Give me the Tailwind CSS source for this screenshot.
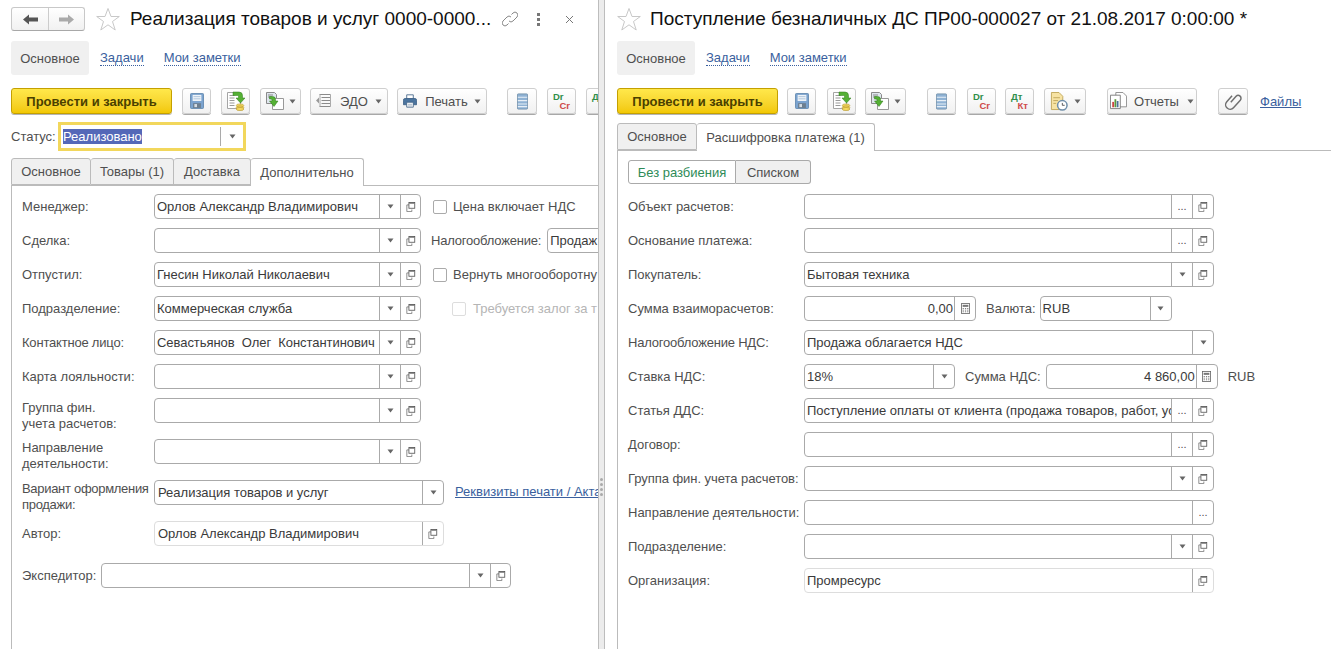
<!DOCTYPE html>
<html>
  <head>
    <title>1C</title>
    <meta charset="utf-8" />
    <script src="https://cdn.jsdelivr.net/npm/@tailwindcss/browser@4"></script>
  </head>

  <body class="bg-white">
    <!-- Icon sprites -->
    <svg class="hidden" xmlns="http://www.w3.org/2000/svg">
      <symbol id="star" viewBox="0 0 24 24"><path d="M12 1.500l3 8h8.300l-6.800 5 2.700 8.500-7.200-5.200-7.200 5.200 2.700-8.500-6.800-5h8.300z" fill="#fff" stroke="#c8c8c8"/></symbol>
      <symbol id="arrow" viewBox="0 0 7 5"><path d="M0.500 0.500h6l-3 4z" fill="#666"/></symbol>
      <symbol id="open" viewBox="0 0 12 12"><path d="M3.500 3.500h-2.500v8h6v-2.500" fill="none" stroke="#777"/><rect x="3.500" y="0.500" width="7" height="7" fill="#fff" stroke="#555"/><path d="M4 1.500h6" stroke="#555"/></symbol>
      <symbol id="calc" viewBox="0 0 11 13"><rect x="0.500" y="0.500" width="10" height="12" fill="#fff" stroke="#666"/><rect x="2" y="2" width="7" height="2.500" fill="#777"/><path d="M2 6.500h1.500M4.800 6.500h1.500M7.500 6.500h1.500M2 8.500h1.500M4.800 8.500h1.500M7.500 8.500h1.500M2 10.500h1.500M4.800 10.500h1.500M7.500 10.500h1.500" stroke="#666"/></symbol>
      <symbol id="save" viewBox="0 0 16 18"><path d="M0.500 1.500a1 1 0 011-1h13a1 1 0 011 1v15a1 1 0 01-1 1h-13a1 1 0 01-1-1z" fill="#7ba3cf" stroke="#5f86ad"/><rect x="3" y="2" width="10" height="7" fill="#eef3f8"/><path d="M4 4h8M4 6.500h8" stroke="#a9c0d8"/><rect x="3.500" y="11.500" width="9" height="5.500" fill="#6d7f90"/><rect x="5" y="12.500" width="3" height="3.500" fill="#d5dde5"/></symbol>
      <symbol id="post" viewBox="0 0 18 20"><path d="M0.500 1.500h10l3 3v13h-13z" fill="#fff" stroke="#a5a5a5"/><path d="M2.500 4.500h5M2.500 7h5M2.500 9.500h5M2.500 12h5M2.500 14.500h5" stroke="#9a9a9a"/><path d="M6 1h6a3.500 3.500 0 013.500 3.500v2.500h2.500l-4.500 5-4.500-5h2.500v-1.500a1 1 0 00-1-1h-4.500z" fill="#55b035" stroke="#2c7a19" stroke-width="0.500"/><ellipse cx="13" cy="14.500" rx="3.800" ry="1.600" fill="#f5d95f" stroke="#b3922a" stroke-width="0.600"/><ellipse cx="13" cy="16.500" rx="3.800" ry="1.600" fill="#f5d95f" stroke="#b3922a" stroke-width="0.600"/><ellipse cx="13" cy="18" rx="3.800" ry="1.600" fill="#f5d95f" stroke="#b3922a" stroke-width="0.600"/></symbol>
      <symbol id="rel" viewBox="0 0 18 18"><path d="M0.500 0.500h8l2 2v9h-10z" fill="#dfe6ee" stroke="#8a8a8a"/><path d="M2 3h5M2 5h4" stroke="#8a8a8a"/><path d="M6.500 6.500h11v11h-11z" fill="#fff" stroke="#999"/><path d="M3.500 4.500h3a3 3 0 013 3v1.500h2.500l-4 5.500-4.500-5.500h2.500v-1a1 1 0 00-1-1h-1.500z" fill="#55b035" stroke="#2c7a19" stroke-width="0.500"/></symbol>
      <symbol id="edo" viewBox="0 0 15 16"><path d="M3.500 1.500h11M5.500 4.500h9M5.500 7.500h9M5.500 10.500h9M3.500 13.500h11" stroke="#8a8a8a" fill="none"/><path d="M4 1.500v12" stroke="#aaa"/><path d="M0 7.500l3-3v6z" fill="#999"/><path d="M14.500 1.500v12" stroke="#aaa"/></symbol>
      <symbol id="print" viewBox="0 0 17 16"><path d="M4.500 0.500h8v5h-8z" fill="#fff" stroke="#3c5f85"/><path d="M0.500 7a2 2 0 012-2h12a2 2 0 012 2v5.500h-16z" fill="#4b749e" stroke="#3c5f85"/><path d="M4.500 9.500h8v6h-8z" fill="#fff" stroke="#3c5f85"/><path d="M6 12h5M6 14h5" stroke="#9ab"/></symbol>
      <symbol id="list" viewBox="0 0 13 19"><rect x="0.500" y="0.500" width="12" height="18" rx="1" fill="#8fb2d4" stroke="#6f8ea9"/><path d="M1 4.500h11M1 8.500h11M1 12.500h11M1 15.500h11" stroke="#e8eff6" stroke-width="1.300"/></symbol>
      <symbol id="sched" viewBox="0 0 19 20"><path d="M1.500 0.500h8l4 4v14h-12z" fill="#f7e3a3" stroke="#c2a85c"/><path d="M3.500 6h7M3.500 9h5M3.500 12h3" stroke="#c2a85c"/><circle cx="13" cy="14" r="5" fill="#fff" stroke="#6f8ea9" stroke-width="1.600"/><path d="M13 11.500v2.500h2.500" stroke="#555" fill="none"/></symbol>
      <symbol id="rep" viewBox="0 0 19 20"><path d="M6.500 0.500h8l4 4v12h-12z" fill="#fff" stroke="#888"/><path d="M0.500 3.500h11v15h-11z" fill="#fff" stroke="#777"/><rect x="2.500" y="11" width="2" height="6" fill="#c44"/><rect x="5" y="8" width="2" height="9" fill="#5a9a3c"/><rect x="7.500" y="10" width="2" height="7" fill="#4d7299"/></symbol>
      <symbol id="clip" viewBox="0 0 16 16"><g transform="rotate(42 8 8)"><path d="M5.500 10.500v-7a2.500 2.500 0 015 0v9a4 4 0 01-8 0v-7" fill="none" stroke="#6f6f6f" stroke-width="1.300" transform="translate(1.500 0) scale(0.950)"/></g></symbol>
    </svg>

    <div class="flex w-[1331px] h-[649px] overflow-hidden text-[13px] leading-[17px] text-[#4f4f4f] font-['Liberation_Sans',Arial,sans-serif]">
      <!-- Left form -->
      <div class="w-[598px] h-full shrink-0 overflow-hidden pl-[11px] flex flex-col">
        <div class="w-[640px] flex flex-col">
        <!-- Title -->
        <div class="flex items-center h-[24px] mt-[7px]">
          <div class="flex w-[74px] h-[24px] border border-[#c8c8c8] border-b-[#a8a8a8] rounded-[3px] bg-linear-to-b from-white to-[#f1f1f1]">
            <div class="w-[37px] flex items-center justify-center border-r border-[#ccc]">
              <svg width="15" height="11" viewBox="0 0 15 11"><path d="M0 5.500l6-5v3h9v4h-9v3z" fill="#555"/></svg>
            </div>
            <div class="flex-1 flex items-center justify-center">
              <svg width="15" height="11" viewBox="0 0 15 11"><path d="M15 5.500l-6-5v3h-9v4h9v3z" fill="#aaa"/></svg>
            </div>
          </div>
          <svg class="ml-[11px]" width="24" height="24"><use href="#star"/></svg>
          <div class="ml-[10px] w-[366px] text-[19px] leading-[24px] text-[#111] whitespace-nowrap">Реализация товаров и услуг 0000-0000...</div>
          <svg class="ml-[6px]" width="16" height="16" viewBox="0 0 16 16"><path d="M9.500 3.500l1.500-1.500a2.800 2.800 0 014 4l-4 4a2.800 2.800 0 01-4 0M6.500 12.500l-1.500 1.500a2.800 2.800 0 01-4-4l4-4a2.800 2.800 0 014 0" fill="none" stroke="#888"/></svg>
          <div class="ml-[19px] flex flex-col gap-[2px]">
            <div class="w-[3px] h-[3px] bg-[#777]"></div>
            <div class="w-[3px] h-[3px] bg-[#777]"></div>
            <div class="w-[3px] h-[3px] bg-[#777]"></div>
          </div>
          <svg class="ml-[25px]" width="9" height="9" viewBox="0 0 9 9"><path d="M1 1l7 7M8 1l-7 7" stroke="#777"/></svg>
        </div>

        <!-- Page tabs -->
        <div class="flex items-center h-[34px] mt-[10px]">
          <div class="w-[78px] h-full bg-[#f0f0f0] rounded-[3px] flex items-center justify-center">Основное</div>
          <a class="ml-[11px] text-[#3a5f9e] border-b border-dotted border-[#3a5f9e] leading-[14px]">Задачи</a>
          <a class="ml-[20px] text-[#3a5f9e] border-b border-dotted border-[#3a5f9e] leading-[14px]">Мои заметки</a>
        </div>

        <!-- Command bar -->
        <div class="flex items-center h-[26px] mt-[13px]">
          <button class="w-[161px] h-[26px] rounded-[3px] border border-[#c4a000] bg-linear-to-b from-[#ffe84a] to-[#f2c800] font-bold text-[#4a4000] shadow-[0_1px_0_#b5b5b5]">Провести и закрыть</button>
          <button class="ml-[10px] w-[29px] h-[26px] flex items-center justify-center rounded-[3px] border border-[#cfcfcf] bg-linear-to-b from-white to-[#f1f1f1] shadow-[0_1px_0_#a8a8a8]"><svg width="14" height="16"><use href="#save"/></svg></button>
          <button class="ml-[10px] w-[29px] h-[26px] flex items-center justify-center rounded-[3px] border border-[#cfcfcf] bg-linear-to-b from-white to-[#f1f1f1] shadow-[0_1px_0_#a8a8a8]"><svg width="18" height="20"><use href="#post"/></svg></button>
          <button class="ml-[10px] w-[41px] h-[26px] flex items-center justify-center gap-[5px] rounded-[3px] border border-[#cfcfcf] bg-linear-to-b from-white to-[#f1f1f1] shadow-[0_1px_0_#a8a8a8]"><svg width="18" height="18"><use href="#rel"/></svg><svg width="7" height="5"><use href="#arrow"/></svg></button>
          <button class="ml-[9px] w-[78px] h-[26px] flex items-center justify-center rounded-[3px] border border-[#cfcfcf] bg-linear-to-b from-white to-[#f1f1f1] shadow-[0_1px_0_#a8a8a8]"><svg width="15" height="16"><use href="#edo"/></svg><span class="ml-[9px]">ЭДО</span><svg class="ml-[7px]" width="7" height="5"><use href="#arrow"/></svg></button>
          <button class="ml-[9px] w-[90px] h-[26px] flex items-center justify-center rounded-[3px] border border-[#cfcfcf] bg-linear-to-b from-white to-[#f1f1f1] shadow-[0_1px_0_#a8a8a8]"><svg width="14" height="14"><use href="#print"/></svg><span class="ml-[8px]">Печать</span><svg class="ml-[6px]" width="7" height="5"><use href="#arrow"/></svg></button>
          <button class="ml-[20px] w-[30px] h-[26px] flex items-center justify-center rounded-[3px] border border-[#cfcfcf] bg-linear-to-b from-white to-[#f1f1f1] shadow-[0_1px_0_#a8a8a8]"><svg width="11" height="17"><use href="#list"/></svg></button>
          <button class="ml-[10px] w-[29px] h-[26px] flex flex-col justify-center rounded-[3px] border border-[#cfcfcf] bg-linear-to-b from-white to-[#f1f1f1] shadow-[0_1px_0_#a8a8a8] text-[9.500px] leading-[9px] font-bold"><span class="pl-[5px] self-start text-[#2f8f4a]">Dr</span><span class="pr-[5px] self-end text-[#cf4a4a]">Cr</span></button>
          <button class="ml-[10px] w-[29px] h-[26px] flex flex-col justify-center rounded-[3px] border border-[#cfcfcf] bg-linear-to-b from-white to-[#f1f1f1] shadow-[0_1px_0_#a8a8a8] text-[9.500px] leading-[9px] font-bold"><span class="pl-[5px] self-start text-[#2f8f4a]">Дт</span><span class="pr-[5px] self-end text-[#cf4a4a]">Кт</span></button>
        </div>

        <!-- Status -->
        <div class="flex items-center mt-[8px] h-[29px]">
          <span class="w-[47px]">Статус:</span>
          <div class="w-[188px] h-[29px] border-[3px] border-[#f2d75c] flex items-center">
            <span class="ml-[2px] bg-[#5468b8] text-white leading-[15px]">Реализовано</span>
            <div class="ml-auto w-[23px] h-[19px] border-l border-[#aaa] flex items-center justify-center"><svg width="7" height="5"><use href="#arrow"/></svg></div>
          </div>
        </div>

        <!-- Form tabs -->
        <div class="flex h-[28px] mt-[7px] relative z-10">
          <div class="w-[80px] h-[27px] bg-[#f0f0f0] border border-[#bbb] rounded-t-[3px] flex items-center justify-center">Основное</div>
          <div class="w-[83px] h-[27px] bg-[#f0f0f0] border border-l-0 border-[#bbb] rounded-t-[3px] flex items-center justify-center">Товары (1)</div>
          <div class="w-[77px] h-[27px] bg-[#f0f0f0] border border-l-0 border-[#bbb] rounded-t-[3px] flex items-center justify-center">Доставка</div>
          <div class="w-[113px] h-[28px] bg-white border border-b-0 border-l-0 border-[#bbb] rounded-t-[3px] flex items-center justify-center">Дополнительно</div>
        </div>

        <!-- Form body -->
        <div class="-mt-px border-l border-t border-[#bbb] h-[470px] pl-[10px] pt-[8px] flex flex-col gap-[9px]">
          <div class="flex h-[25px]">
            <span class="w-[132px] leading-[25px]">Менеджер:</span>
            <div class="w-[267px] h-[25px] border border-[#aaa] rounded-[4px] flex items-center">
              <span class="flex-1 pl-[2px] text-[#3a3a3a] whitespace-nowrap overflow-hidden">Орлов Александр Владимирович</span>
              <div class="w-[21px] h-full border-l border-[#aaa] flex items-center justify-center"><svg width="7" height="5"><use href="#arrow"/></svg></div>
              <div class="w-[20px] h-full border-l border-[#aaa] flex items-center justify-center"><svg width="10" height="10"><use href="#open"/></svg></div>
            </div>
            <div class="ml-[12px] flex items-center"><div class="w-[14px] h-[14px] border border-[#aaa] rounded-[2px]"></div><span class="ml-[6px]">Цена включает НДС</span></div>
          </div>
          <div class="flex h-[25px]">
            <span class="w-[132px] leading-[25px]">Сделка:</span>
            <div class="w-[267px] h-[25px] border border-[#aaa] rounded-[4px] flex items-center">
              <span class="flex-1"></span>
              <div class="w-[21px] h-full border-l border-[#aaa] flex items-center justify-center"><svg width="7" height="5"><use href="#arrow"/></svg></div>
              <div class="w-[20px] h-full border-l border-[#aaa] flex items-center justify-center"><svg width="10" height="10"><use href="#open"/></svg></div>
            </div>
            <span class="ml-[10px] leading-[25px] tracking-[-0.2px]">Налогообложение:</span>
            <div class="ml-[6px] w-[100px] h-[25px] border border-[#aaa] rounded-[4px] pl-[2px] leading-[23px] text-[#3a3a3a]">Продаж</div>
          </div>
          <div class="flex h-[25px]">
            <span class="w-[132px] leading-[25px]">Отпустил:</span>
            <div class="w-[267px] h-[25px] border border-[#aaa] rounded-[4px] flex items-center">
              <span class="flex-1 pl-[2px] text-[#3a3a3a] whitespace-nowrap overflow-hidden">Гнесин Николай Николаевич</span>
              <div class="w-[21px] h-full border-l border-[#aaa] flex items-center justify-center"><svg width="7" height="5"><use href="#arrow"/></svg></div>
              <div class="w-[20px] h-full border-l border-[#aaa] flex items-center justify-center"><svg width="10" height="10"><use href="#open"/></svg></div>
            </div>
            <div class="ml-[12px] flex items-center whitespace-nowrap"><div class="w-[14px] h-[14px] border border-[#aaa] rounded-[2px]"></div><span class="ml-[6px]">Вернуть многооборотну</span></div>
          </div>
          <div class="flex h-[25px]">
            <span class="w-[132px] leading-[25px]">Подразделение:</span>
            <div class="w-[267px] h-[25px] border border-[#aaa] rounded-[4px] flex items-center">
              <span class="flex-1 pl-[2px] text-[#3a3a3a] whitespace-nowrap overflow-hidden">Коммерческая служба</span>
              <div class="w-[21px] h-full border-l border-[#aaa] flex items-center justify-center"><svg width="7" height="5"><use href="#arrow"/></svg></div>
              <div class="w-[20px] h-full border-l border-[#aaa] flex items-center justify-center"><svg width="10" height="10"><use href="#open"/></svg></div>
            </div>
            <div class="ml-[31px] flex items-center whitespace-nowrap text-[#b5b5b5]"><div class="w-[14px] h-[14px] border border-[#ddd] rounded-[2px]"></div><span class="ml-[7px]">Требуется залог за т</span></div>
          </div>
          <div class="flex h-[25px]">
            <span class="w-[132px] leading-[25px] tracking-[-0.2px]">Контактное лицо:</span>
            <div class="w-[267px] h-[25px] border border-[#aaa] rounded-[4px] flex items-center">
              <span class="flex-1 min-w-0 pl-[2px] text-[#3a3a3a] whitespace-pre overflow-hidden tracking-[-0.05px]">Севастьянов  Олег  Константинович</span>
              <div class="w-[21px] h-full border-l border-[#aaa] flex items-center justify-center shrink-0"><svg width="7" height="5"><use href="#arrow"/></svg></div>
              <div class="w-[20px] h-full border-l border-[#aaa] flex items-center justify-center shrink-0"><svg width="10" height="10"><use href="#open"/></svg></div>
            </div>
          </div>
          <div class="flex h-[25px]">
            <span class="w-[132px] leading-[25px]">Карта лояльности:</span>
            <div class="w-[267px] h-[25px] border border-[#aaa] rounded-[4px] flex items-center">
              <span class="flex-1"></span>
              <div class="w-[21px] h-full border-l border-[#aaa] flex items-center justify-center"><svg width="7" height="5"><use href="#arrow"/></svg></div>
              <div class="w-[20px] h-full border-l border-[#aaa] flex items-center justify-center"><svg width="10" height="10"><use href="#open"/></svg></div>
            </div>
          </div>
          <div class="flex h-[32px]">
            <span class="w-[132px] pt-[2px] leading-[16px]">Группа фин.<br />учета расчетов:</span>
            <div class="w-[267px] h-[25px] border border-[#aaa] rounded-[4px] flex items-center">
              <span class="flex-1"></span>
              <div class="w-[21px] h-full border-l border-[#aaa] flex items-center justify-center"><svg width="7" height="5"><use href="#arrow"/></svg></div>
              <div class="w-[20px] h-full border-l border-[#aaa] flex items-center justify-center"><svg width="10" height="10"><use href="#open"/></svg></div>
            </div>
          </div>
          <div class="flex h-[32px]">
            <span class="w-[132px] pt-[1px] leading-[16px]">Направление<br />деятельности:</span>
            <div class="w-[267px] h-[25px] border border-[#aaa] rounded-[4px] flex items-center">
              <span class="flex-1"></span>
              <div class="w-[21px] h-full border-l border-[#aaa] flex items-center justify-center"><svg width="7" height="5"><use href="#arrow"/></svg></div>
              <div class="w-[20px] h-full border-l border-[#aaa] flex items-center justify-center"><svg width="10" height="10"><use href="#open"/></svg></div>
            </div>
          </div>
          <div class="flex h-[32px]">
            <span class="w-[132px] pt-[1px] leading-[16px] tracking-[-0.3px]">Вариант оформления<br />продажи:</span>
            <div class="w-[290px] h-[25px] border border-[#aaa] rounded-[4px] flex items-center">
              <span class="flex-1 pl-[3px] text-[#3a3a3a] whitespace-nowrap">Реализация товаров и услуг</span>
              <div class="w-[21px] h-full border-l border-[#aaa] flex items-center justify-center"><svg width="7" height="5"><use href="#arrow"/></svg></div>
            </div>
            <a class="ml-[11px] leading-[24px] text-[#3a5f9e] underline whitespace-nowrap">Реквизиты печати / Акта</a>
          </div>
          <div class="flex h-[25px]">
            <span class="w-[132px] leading-[25px]">Автор:</span>
            <div class="w-[290px] h-[25px] border border-[#ddd] rounded-[4px] flex items-center">
              <span class="flex-1 pl-[3px] text-[#3a3a3a] whitespace-nowrap">Орлов Александр Владимирович</span>
              <div class="w-[21px] h-full border-l border-[#aaa] flex items-center justify-center"><svg width="10" height="10"><use href="#open"/></svg></div>
            </div>
          </div>
          <div class="flex h-[25px] mt-[8px]">
            <span class="w-[79px] leading-[25px]">Экспедитор:</span>
            <div class="w-[410px] h-[25px] border border-[#aaa] rounded-[4px] flex items-center">
              <span class="flex-1"></span>
              <div class="w-[21px] h-full border-l border-[#aaa] flex items-center justify-center"><svg width="7" height="5"><use href="#arrow"/></svg></div>
              <div class="w-[20px] h-full border-l border-[#aaa] flex items-center justify-center"><svg width="10" height="10"><use href="#open"/></svg></div>
            </div>
          </div>
        </div>
        </div>
      </div>

      <!-- Splitter -->
      <div class="w-[7px] h-full shrink-0 bg-[#ececec] border-l border-r border-[#bdbdbd] flex flex-col items-center gap-[2px] pt-[478px]">
        <div class="w-[3px] h-[3px] rounded-full bg-[#aaa]"></div>
        <div class="w-[3px] h-[3px] rounded-full bg-[#aaa]"></div>
        <div class="w-[3px] h-[3px] rounded-full bg-[#aaa]"></div>
        <div class="w-[3px] h-[3px] rounded-full bg-[#aaa]"></div>
      </div>

      <!-- Right form -->
      <div class="flex-1 h-full pl-[12px] flex flex-col min-w-0">
        <!-- Title -->
        <div class="flex items-center h-[24px] mt-[7px]">
          <svg width="24" height="24"><use href="#star"/></svg>
          <div class="ml-[9px] text-[19px] leading-[24px] text-[#111] whitespace-nowrap">Поступление безналичных ДС ПР00-000027 от 21.08.2017 0:00:00 *</div>
        </div>

        <!-- Page tabs -->
        <div class="flex items-center h-[34px] mt-[10px]">
          <div class="w-[78px] h-full bg-[#f0f0f0] rounded-[3px] flex items-center justify-center">Основное</div>
          <a class="ml-[11px] text-[#3a5f9e] border-b border-dotted border-[#3a5f9e] leading-[14px]">Задачи</a>
          <a class="ml-[20px] text-[#3a5f9e] border-b border-dotted border-[#3a5f9e] leading-[14px]">Мои заметки</a>
        </div>

        <!-- Command bar -->
        <div class="flex items-center h-[26px] mt-[13px]">
          <button class="w-[161px] h-[26px] rounded-[3px] border border-[#c4a000] bg-linear-to-b from-[#ffe84a] to-[#f2c800] font-bold text-[#4a4000] shadow-[0_1px_0_#b5b5b5]">Провести и закрыть</button>
          <button class="ml-[9px] w-[29px] h-[26px] flex items-center justify-center rounded-[3px] border border-[#cfcfcf] bg-linear-to-b from-white to-[#f1f1f1] shadow-[0_1px_0_#a8a8a8]"><svg width="14" height="16"><use href="#save"/></svg></button>
          <button class="ml-[11px] w-[29px] h-[26px] flex items-center justify-center rounded-[3px] border border-[#cfcfcf] bg-linear-to-b from-white to-[#f1f1f1] shadow-[0_1px_0_#a8a8a8]"><svg width="18" height="20"><use href="#post"/></svg></button>
          <button class="ml-[9px] w-[41px] h-[26px] flex items-center justify-center gap-[5px] rounded-[3px] border border-[#cfcfcf] bg-linear-to-b from-white to-[#f1f1f1] shadow-[0_1px_0_#a8a8a8]"><svg width="18" height="18"><use href="#rel"/></svg><svg width="7" height="5"><use href="#arrow"/></svg></button>
          <button class="ml-[21px] w-[29px] h-[26px] flex items-center justify-center rounded-[3px] border border-[#cfcfcf] bg-linear-to-b from-white to-[#f1f1f1] shadow-[0_1px_0_#a8a8a8]"><svg width="11" height="17"><use href="#list"/></svg></button>
          <button class="ml-[11px] w-[29px] h-[26px] flex flex-col justify-center rounded-[3px] border border-[#cfcfcf] bg-linear-to-b from-white to-[#f1f1f1] shadow-[0_1px_0_#a8a8a8] text-[9.500px] leading-[9px] font-bold"><span class="pl-[5px] self-start text-[#2f8f4a]">Dr</span><span class="pr-[5px] self-end text-[#cf4a4a]">Cr</span></button>
          <button class="ml-[9px] w-[29px] h-[26px] flex flex-col justify-center rounded-[3px] border border-[#cfcfcf] bg-linear-to-b from-white to-[#f1f1f1] shadow-[0_1px_0_#a8a8a8] text-[9.500px] leading-[9px] font-bold"><span class="pl-[5px] self-start text-[#2f8f4a]">Дт</span><span class="pr-[5px] self-end text-[#cf4a4a]">Кт</span></button>
          <button class="ml-[10px] w-[42px] h-[26px] flex items-center justify-center gap-[6px] rounded-[3px] border border-[#cfcfcf] bg-linear-to-b from-white to-[#f1f1f1] shadow-[0_1px_0_#a8a8a8]"><svg width="18" height="19"><use href="#sched"/></svg><svg width="7" height="5"><use href="#arrow"/></svg></button>
          <button class="ml-[21px] w-[90px] h-[26px] flex items-center justify-center rounded-[3px] border border-[#cfcfcf] bg-linear-to-b from-white to-[#f1f1f1] shadow-[0_1px_0_#a8a8a8]"><svg width="17" height="18"><use href="#rep"/></svg><span class="ml-[7px]">Отчеты</span><svg class="ml-[8px]" width="7" height="5"><use href="#arrow"/></svg></button>
          <button class="ml-[21px] w-[30px] h-[26px] flex items-center justify-center rounded-[3px] border border-[#cfcfcf] bg-linear-to-b from-white to-[#f1f1f1] shadow-[0_1px_0_#a8a8a8]"><svg width="19" height="19"><use href="#clip"/></svg></button>
          <a class="ml-[12px] text-[#3a5f9e] underline">Файлы</a>
        </div>

        <!-- Form tabs -->
        <div class="flex h-[28px] mt-[9px] relative z-10">
          <div class="w-[80px] h-[27px] bg-[#f0f0f0] border border-[#bbb] rounded-t-[3px] flex items-center justify-center">Основное</div>
          <div class="w-[178px] h-[28px] bg-white border border-b-0 border-l-0 border-[#bbb] rounded-t-[3px] flex items-center justify-center">Расшифровка платежа (1)</div>
        </div>

        <!-- Form body -->
        <div class="-mt-px border-l border-t border-[#bbb] flex-1 pl-[10px] pt-[9px] flex flex-col gap-[9px]">
          <div class="flex h-[25px]">
            <div class="w-[108px] h-[24px] border border-[#aaa] rounded-l-[3px] flex items-center justify-center text-[#2e8b57]">Без разбиения</div>
            <div class="w-[75px] h-[24px] border border-l-0 border-[#aaa] rounded-r-[3px] bg-[#f0f0f0] flex items-center justify-center">Списком</div>
          </div>
          <div class="flex h-[25px]">
            <span class="w-[176px] leading-[25px]">Объект расчетов:</span>
            <div class="w-[410px] h-[25px] border border-[#aaa] rounded-[4px] flex items-center">
              <span class="flex-1"></span>
              <div class="w-[21px] h-full border-l border-[#aaa] flex items-center justify-center text-[11px]">...</div>
              <div class="w-[21px] h-full border-l border-[#aaa] flex items-center justify-center"><svg width="10" height="10"><use href="#open"/></svg></div>
            </div>
          </div>
          <div class="flex h-[25px]">
            <span class="w-[176px] leading-[25px]">Основание платежа:</span>
            <div class="w-[410px] h-[25px] border border-[#aaa] rounded-[4px] flex items-center">
              <span class="flex-1"></span>
              <div class="w-[21px] h-full border-l border-[#aaa] flex items-center justify-center text-[11px]">...</div>
              <div class="w-[21px] h-full border-l border-[#aaa] flex items-center justify-center"><svg width="10" height="10"><use href="#open"/></svg></div>
            </div>
          </div>
          <div class="flex h-[25px]">
            <span class="w-[176px] leading-[25px]">Покупатель:</span>
            <div class="w-[410px] h-[25px] border border-[#aaa] rounded-[4px] flex items-center">
              <span class="flex-1 pl-[2px] text-[#3a3a3a]">Бытовая техника</span>
              <div class="w-[21px] h-full border-l border-[#aaa] flex items-center justify-center"><svg width="7" height="5"><use href="#arrow"/></svg></div>
              <div class="w-[21px] h-full border-l border-[#aaa] flex items-center justify-center"><svg width="10" height="10"><use href="#open"/></svg></div>
            </div>
          </div>
          <div class="flex h-[25px]">
            <span class="w-[176px] leading-[25px]">Сумма взаиморасчетов:</span>
            <div class="w-[172px] h-[25px] border border-[#aaa] rounded-[4px] flex items-center">
              <span class="flex-1 pr-[1px] text-right text-[#3a3a3a]">0,00</span>
              <div class="w-[21px] h-full border-l border-[#aaa] flex items-center justify-center"><svg width="9" height="11"><use href="#calc"/></svg></div>
            </div>
            <span class="ml-[10px] leading-[25px]">Валюта:</span>
            <div class="ml-[4px] w-[132px] h-[25px] border border-[#aaa] rounded-[4px] flex items-center">
              <span class="flex-1 pl-[2px] text-[#3a3a3a]">RUB</span>
              <div class="w-[21px] h-full border-l border-[#aaa] flex items-center justify-center"><svg width="7" height="5"><use href="#arrow"/></svg></div>
            </div>
          </div>
          <div class="flex h-[25px]">
            <span class="w-[176px] leading-[25px] tracking-[-0.2px]">Налогообложение НДС:</span>
            <div class="w-[410px] h-[25px] border border-[#aaa] rounded-[4px] flex items-center">
              <span class="flex-1 pl-[2px] text-[#3a3a3a]">Продажа облагается НДС</span>
              <div class="w-[21px] h-full border-l border-[#aaa] flex items-center justify-center"><svg width="7" height="5"><use href="#arrow"/></svg></div>
            </div>
          </div>
          <div class="flex h-[25px]">
            <span class="w-[176px] leading-[25px]">Ставка НДС:</span>
            <div class="w-[151px] h-[25px] border border-[#aaa] rounded-[4px] flex items-center">
              <span class="flex-1 pl-[2px] text-[#3a3a3a]">18%</span>
              <div class="w-[21px] h-full border-l border-[#aaa] flex items-center justify-center"><svg width="7" height="5"><use href="#arrow"/></svg></div>
            </div>
            <span class="ml-[10px] leading-[25px]">Сумма НДС:</span>
            <div class="ml-[5px] w-[172px] h-[25px] border border-[#aaa] rounded-[4px] flex items-center">
              <span class="flex-1 pr-[1px] text-right text-[#3a3a3a]">4 860,00</span>
              <div class="w-[21px] h-full border-l border-[#aaa] flex items-center justify-center"><svg width="9" height="11"><use href="#calc"/></svg></div>
            </div>
            <span class="ml-[10px] leading-[25px]">RUB</span>
          </div>
          <div class="flex h-[25px]">
            <span class="w-[176px] leading-[25px]">Статья ДДС:</span>
            <div class="w-[410px] h-[25px] border border-[#aaa] rounded-[4px] flex items-center">
              <div class="flex-1 min-w-0 pl-[2px] text-[#3a3a3a] whitespace-nowrap overflow-hidden">Поступление оплаты от клиента (продажа товаров, работ, ус</div>
              <div class="w-[21px] shrink-0 h-full border-l border-[#aaa] flex items-center justify-center text-[11px]">...</div>
              <div class="w-[21px] shrink-0 h-full border-l border-[#aaa] flex items-center justify-center"><svg width="10" height="10"><use href="#open"/></svg></div>
            </div>
          </div>
          <div class="flex h-[25px]">
            <span class="w-[176px] leading-[25px]">Договор:</span>
            <div class="w-[410px] h-[25px] border border-[#aaa] rounded-[4px] flex items-center">
              <span class="flex-1"></span>
              <div class="w-[21px] h-full border-l border-[#aaa] flex items-center justify-center text-[11px]">...</div>
              <div class="w-[21px] h-full border-l border-[#aaa] flex items-center justify-center"><svg width="10" height="10"><use href="#open"/></svg></div>
            </div>
          </div>
          <div class="flex h-[25px]">
            <span class="w-[176px] leading-[25px] tracking-[-0.05px]">Группа фин. учета расчетов:</span>
            <div class="w-[410px] h-[25px] border border-[#aaa] rounded-[4px] flex items-center">
              <span class="flex-1"></span>
              <div class="w-[21px] h-full border-l border-[#aaa] flex items-center justify-center"><svg width="7" height="5"><use href="#arrow"/></svg></div>
              <div class="w-[21px] h-full border-l border-[#aaa] flex items-center justify-center"><svg width="10" height="10"><use href="#open"/></svg></div>
            </div>
          </div>
          <div class="flex h-[25px]">
            <span class="w-[176px] leading-[25px]">Направление деятельности:</span>
            <div class="w-[410px] h-[25px] border border-[#aaa] rounded-[4px] flex items-center">
              <span class="flex-1"></span>
              <div class="w-[21px] h-full border-l border-[#aaa] flex items-center justify-center text-[11px]">...</div>
            </div>
          </div>
          <div class="flex h-[25px]">
            <span class="w-[176px] leading-[25px]">Подразделение:</span>
            <div class="w-[410px] h-[25px] border border-[#aaa] rounded-[4px] flex items-center">
              <span class="flex-1"></span>
              <div class="w-[21px] h-full border-l border-[#aaa] flex items-center justify-center"><svg width="7" height="5"><use href="#arrow"/></svg></div>
              <div class="w-[21px] h-full border-l border-[#aaa] flex items-center justify-center"><svg width="10" height="10"><use href="#open"/></svg></div>
            </div>
          </div>
          <div class="flex h-[25px]">
            <span class="w-[176px] leading-[25px]">Организация:</span>
            <div class="w-[410px] h-[25px] border border-[#ddd] rounded-[4px] flex items-center">
              <span class="flex-1 pl-[2px] text-[#3a3a3a]">Промресурс</span>
              <div class="w-[21px] h-full border-l border-[#aaa] flex items-center justify-center"><svg width="10" height="10"><use href="#open"/></svg></div>
            </div>
          </div>
        </div>
      </div>
    </div>
  </body>
</html>
